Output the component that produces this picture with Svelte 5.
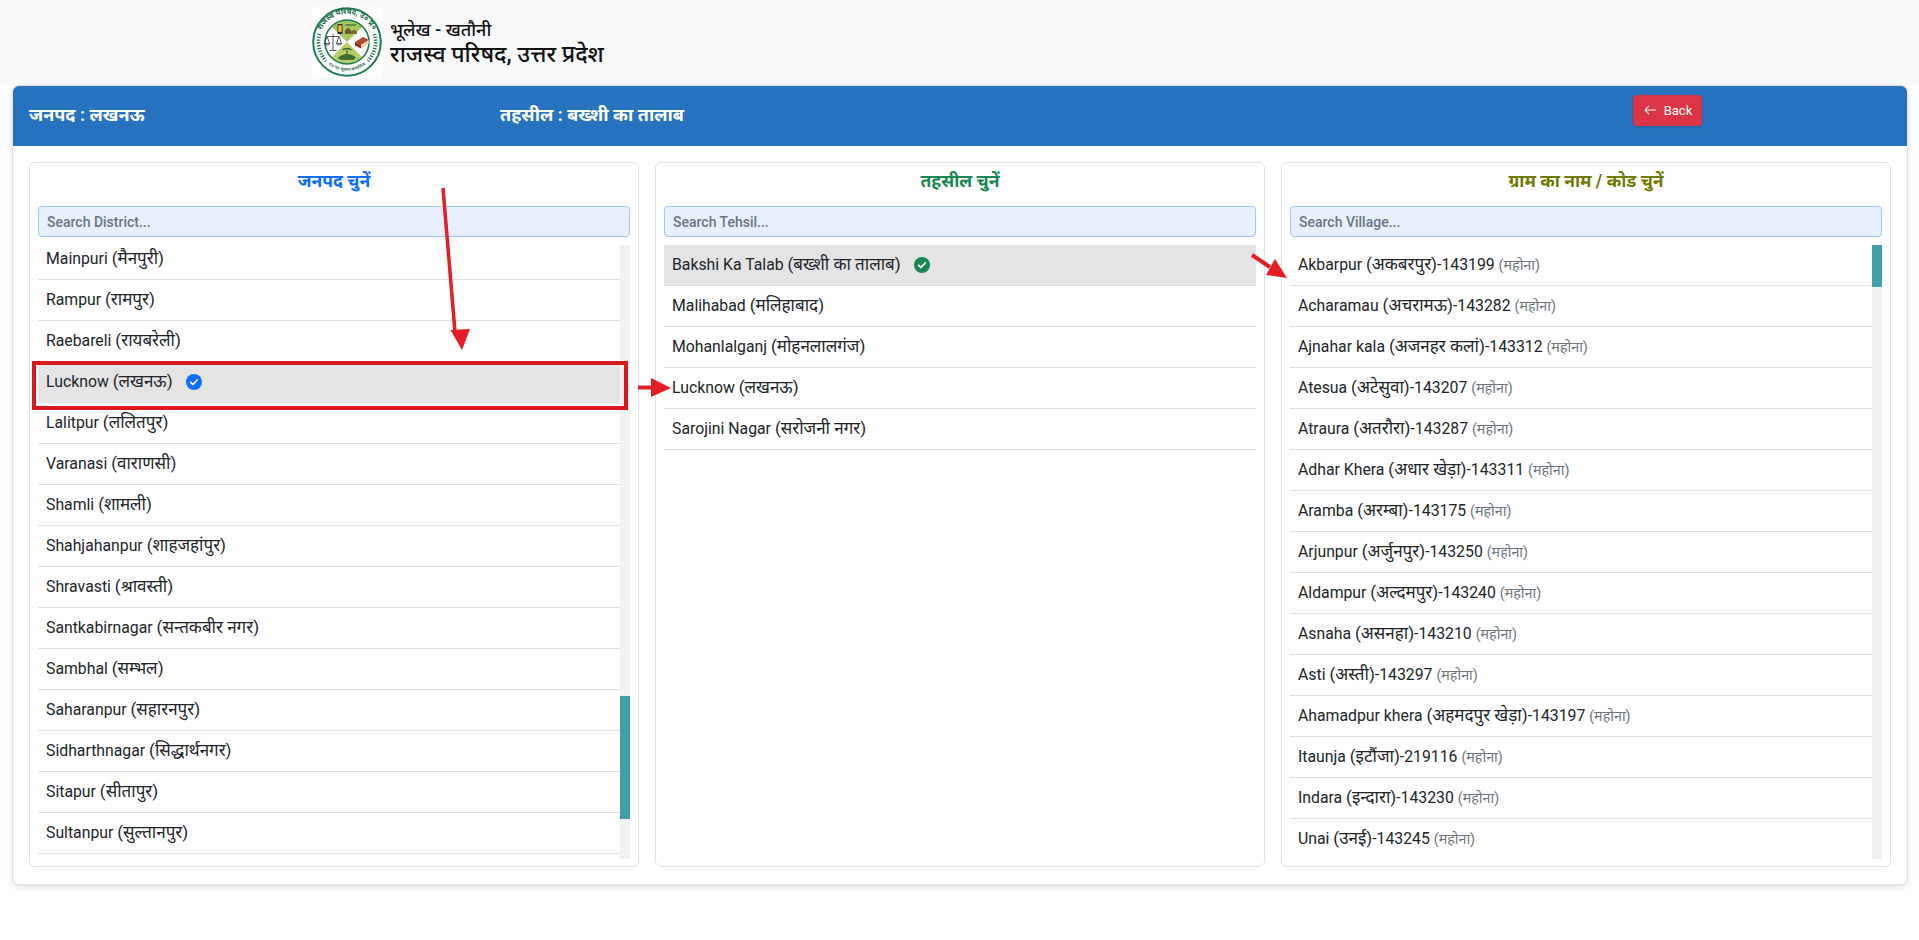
<script>
  const parse = (s) => {
    const m = s.match(/^(.*?)(\(.*?\))(.*)$/);
    return { lat: m[1], hi: m[2], rest: m[3] };
  };
  const districts = ['Mainpuri (मैनपुरी)','Rampur (रामपुर)','Raebareli (रायबरेली)','Lucknow (लखनऊ)','Lalitpur (ललितपुर)','Varanasi (वाराणसी)','Shamli (शामली)','Shahjahanpur (शाहजहांपुर)','Shravasti (श्रावस्ती)','Santkabirnagar (सन्तकबीर नगर)','Sambhal (सम्भल)','Saharanpur (सहारनपुर)','Sidharthnagar (सिद्धार्थनगर)','Sitapur (सीतापुर)','Sultanpur (सुल्तानपुर)'].map(parse);
  const tehsils = ['Bakshi Ka Talab (बख्शी का तालाब)','Malihabad (मलिहाबाद)','Mohanlalganj (मोहनलालगंज)','Lucknow (लखनऊ)','Sarojini Nagar (सरोजनी नगर)'].map(parse);
  const villages = ['Akbarpur (अकबरपुर)-143199','Acharamau (अचरामऊ)-143282','Ajnahar kala (अजनहर कलां)-143312','Atesua (अटेसुवा)-143207','Atraura (अतरौरा)-143287','Adhar Khera (अधार खेड़ा)-143311','Aramba (अरम्बा)-143175','Arjunpur (अर्जुनपुर)-143250','Aldampur (अल्दमपुर)-143240','Asnaha (असनहा)-143210','Asti (अस्ती)-143297','Ahamadpur khera (अहमदपुर खेड़ा)-143197','Itaunja (इटौंजा)-219116','Indara (इन्दारा)-143230','Unai (उनई)-143245'].map(parse);
</script>

{#snippet check(color)}
  <svg class="check" viewBox="0 0 16 16" width="16" height="16"><circle cx="8" cy="8" r="8" fill={color}/><path d="M4.6 8.3l2.3 2.3 4.4-4.8" fill="none" stroke="#fff" stroke-width="1.6" stroke-linecap="round" stroke-linejoin="round"/></svg>
{/snippet}

{#snippet label(r)}{r.lat}<span class="hi">{r.hi}</span>{r.rest}{/snippet}

<div class="page">
  <header class="top">
    <svg class="logo" viewBox="0 0 70 70" width="70" height="70">
      <rect width="70" height="70" fill="#fff"/>
      <circle cx="35" cy="35" r="33.8" fill="#fff" stroke="#1b7d4f" stroke-width="2"/>
      <path id="ringtop" d="M8 27A28.2 28.2 0 0 1 62 27" fill="none"/>
      <path id="ringbot" d="M11 52A30 30 0 0 0 59 52" fill="none"/>
      <text class="ringtext"><textPath href="#ringtop" startOffset="50%" text-anchor="middle">राजस्व परिषद, उ० प्र०</textPath></text>
      <text class="ringsmall"><textPath href="#ringbot" startOffset="50%" text-anchor="middle">रा० प० सूचना कार्यालय</textPath></text>
      <path d="M7.5 27A28.5 28.5 0 0 0 14 54" fill="none" stroke="#1b7d4f" stroke-width="3.6" stroke-dasharray="1.3 1.5"/>
      <path d="M62.5 27A28.5 28.5 0 0 1 56 54" fill="none" stroke="#1b7d4f" stroke-width="3.6" stroke-dasharray="1.3 1.5"/>
      <clipPath id="inner"><circle cx="35" cy="35" r="22"/></clipPath>
      <g clip-path="url(#inner)">
        <path d="M12 12H58L35 35Z" fill="#a5c561"/>
        <path d="M12 58H58L35 35Z" fill="#b6cd6a"/>
        <rect x="25.5" y="17" width="5" height="10" rx=".8" fill="#2b2b2b"/>
        <rect x="26.3" y="18.3" width="3.4" height="6.6" fill="#e3c04a"/>
        <path d="M33 23.5l3-3 3 3v3.5h-6z" fill="#6d5a2a"/>
        <path d="M39 24.5l3-2 3 2v2.5h-6z" fill="#7c6a2e"/>
        <path d="M33 18h11" stroke="#4e7a34" stroke-width="1.4"/>
        <path d="M26 51c3-3 6-4 9-4s7 1 9 4l-3 2H29z" fill="#3f6f30"/>
        <path d="M35 47v-4M30.5 43c2-1.8 7-1.8 9 0" stroke="#2f5a26" stroke-width="1.1" fill="none"/>
      </g>
      <circle cx="35" cy="35" r="22" fill="none" stroke="#1b7d4f" stroke-width="1.6"/>
      <g stroke="#333" stroke-width=".8" fill="none">
        <path d="M21 27v16M17.5 43.5h7M15 29.5h12M15 29.5l-2.6 7h5.2M15 29.5l2.6 7M27 29.5l-2.6 7h5.2M27 29.5l2.6 7M12.4 36.5c.6 2 4.6 2 5.2 0M24.4 36.5c.6 2 4.6 2 5.2 0"/>
      </g>
      <path d="M43 35l8-5 6 3-8 5z" fill="#b5452b"/>
      <path d="M43 35v3.5l6 3v-3.5z" fill="#8f2e1b"/>
      <path d="M49 38l8-5v3.5l-8 5z" fill="#e6cfa5"/>
    </svg>
    <div class="brand">
      <div class="b1">भूलेख - खतौनी</div>
      <div class="b2">राजस्व परिषद, उत्तर प्रदेश</div>
    </div>
  </header>

  <section class="card">
    <div class="head">
      <div class="h1">जनपद : लखनऊ</div>
      <div class="h2">तहसील : बख्शी का तालाब</div>
      <button class="back">
        <svg viewBox="0 0 16 16" width="14" height="14"><path d="M14.5 8H2.2M6.6 3.6L2.2 8l4.4 4.4" fill="none" stroke="#fff" stroke-width="1.2" stroke-linecap="round" stroke-linejoin="round"/></svg>
        Back
      </button>
    </div>
    <div class="panels">
      <div class="panel">
        <h5 class="blue">जनपद चुनें</h5>
        <input placeholder="Search District..." />
        <div class="list">
          <div class="rows shifted">
            {#each districts as d, i}
              <div class="row" class:sel={i === 3}>{@render label(d)}{#if i === 3}{@render check('#0d6efd')}{/if}</div>
            {/each}
          </div>
          <div class="track"><div class="thumb" style="margin-top:451px;height:123px"></div></div>
        </div>
      </div>
      <div class="panel">
        <h5 class="green">तहसील चुनें</h5>
        <input placeholder="Search Tehsil..." />
        <div class="list">
          <div class="rows">
            {#each tehsils as t, i}
              <div class="row" class:sel={i === 0}>{@render label(t)}{#if i === 0}{@render check('#198754')}{/if}</div>
            {/each}
          </div>
        </div>
      </div>
      <div class="panel">
        <h5 class="olive">ग्राम का नाम / कोड चुनें</h5>
        <input placeholder="Search Village..." />
        <div class="list">
          <div class="rows">
            {#each villages as v}
              <div class="row">{@render label(v)} <small>(महोना)</small></div>
            {/each}
          </div>
          <div class="track"><div class="thumb" style="margin-top:0;height:42px"></div></div>
        </div>
      </div>
    </div>
  </section>

  <svg class="marks" viewBox="0 0 1919 940" width="1919" height="940">
    <path d="M443 188L455 332" stroke="#e31e24" stroke-width="3.5" fill="none"/>
    <path d="M450.5 330L470 329L462 350Z" fill="#e31e24"/>
    <rect x="34" y="363" width="592" height="45" fill="none" stroke="#d9181e" stroke-width="4"/>
    <path d="M638 387.5H652" stroke="#e31e24" stroke-width="4"/>
    <path d="M651 378L671 388L651 397Z" fill="#e31e24"/>
    <path d="M1252 255L1270 267" stroke="#e31e24" stroke-width="4"/>
    <path d="M1275 259L1287 278L1266 275Z" fill="#e31e24"/>
  </svg>
</div>

<style>
  :global(body) {
    margin: 0;
    background: #fff;
    color: #212529;
    font-family: Roboto, "Noto Sans", "Noto Sans CJK SC", sans-serif;
  }
  .page { position: relative; height: 940px; overflow: hidden; }
  .top {
    height: 85px;
    box-sizing: border-box;
    padding: 7px 0 0 312px;
    background: #f8f9fa;
    display: flex;
    gap: 8px;
  }
  .logo { display: block; flex: none; }
  .brand { padding-top: 12px; color: #111; }
  .b1 { font-size: 18px; line-height: 22px; font-weight: 500; }
  .b2 { font-size: 23px; line-height: 28px; font-weight: 500; }
  .ringtext { font-size: 7.6px; fill: #1b6b45; font-weight: 700; }
  .ringsmall { font-size: 4.6px; fill: #1b6b45; font-weight: 600; }
  .card {
    margin: 0 11px 0 12px;
    height: 800px;
    box-sizing: border-box;
    border: 1px solid #dee2e6;
    border-radius: 7px;
    overflow: hidden;
    background: #fff;
    box-shadow: 0 2px 6px rgba(0,0,0,.12);
  }
  .head {
    height: 60px;
    box-sizing: border-box;
    padding: 0 0 5px 16px;
    background: #2873c0;
    color: #fff;
    display: flex;
    align-items: center;
    font-weight: 700;
    font-size: 18px;
  }
  .h1 { width: 471px; }
  .h2 { width: 1133px; }
  .back {
    height: 31px;
    width: 69px;
    margin-top: -7px;
    padding: 0;
    border: 0;
    border-radius: 4px;
    background: #dc3545;
    color: #fff;
    font: 13px Roboto, sans-serif;
    display: flex;
    align-items: center;
    justify-content: center;
    gap: 7px;
    box-shadow: 0 1px 3px rgba(0,0,0,.2);
  }
  .panels {
    display: grid;
    grid-template-columns: repeat(3, 1fr);
    gap: 16px;
    padding: 16px;
    height: 706px;
    box-sizing: content-box;
  }
  .panel {
    border: 1px solid #dee2e6;
    border-radius: 6px;
    padding: 0 8px;
    height: 705px;
    box-sizing: border-box;
    display: flex;
    flex-direction: column;
  }
  h5 {
    margin: 0;
    height: 43px;
    line-height: 36px;
    text-align: center;
    font-size: 17.5px;
    font-weight: 700;
  }
  .blue { color: #0d6efd; }
  .green { color: #198754; }
  .olive { color: #6f7a00; }
  input {
    height: 31px;
    box-sizing: border-box;
    width: 100%;
    flex: none;
    border: 1px solid #9ec5fe;
    border-radius: 4px;
    background: #e8f0fe;
    padding: 0 8px;
    font: 500 14px Roboto, sans-serif;
    outline: none;
  }
  input::placeholder { color: #6c757d; opacity: 1; }
  .list {
    margin-top: 8px;
    height: 614px;
    display: flex;
    overflow: hidden;
  }
  .rows { flex: 1; min-width: 0; overflow: hidden; }
  .shifted > :first-child { margin-top: -6.5px; }
  .row {
    height: 41px;
    box-sizing: border-box;
    padding: 0 8px;
    line-height: 39.5px;
    border-bottom: 1px solid #dfdfdf;
    font-size: 15.8px;
    white-space: nowrap;
  }
  .hi { font-size: 17px; }
  .row.sel { background: #e4e4e4; }
  small { font-size: 14.3px; color: #6c757d; }
  .check { margin-left: 13px; vertical-align: -3px; }
  .track { width: 10px; flex: none; background: #f1f1f1; }
  .thumb { background: #3fa0a8; }
  .marks { position: absolute; inset: 0; pointer-events: none; }
</style>
